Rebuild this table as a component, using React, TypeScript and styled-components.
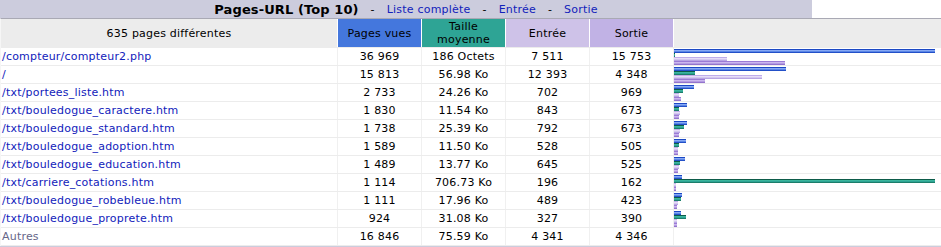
import React from "react";
import styled, { createGlobalStyle, css } from "styled-components";

const GlobalStyle = createGlobalStyle`
  html, body { margin: 0; padding: 0; background: #ffffff; }
  body { font-family: "DejaVu Sans", Verdana, "Liberation Sans", sans-serif; }
`;

type Row = {
  url: string;
  pages: number;
  size: string;
  kb: number;
  entry: number;
  exit: number;
};

const ROWS: Row[] = [
  { url: "/compteur/compteur2.php", pages: 36969, size: "186 Octets", kb: 0.18, entry: 7511, exit: 15753 },
  { url: "/", pages: 15813, size: "56.98 Ko", kb: 56.98, entry: 12393, exit: 4348 },
  { url: "/txt/portees_liste.htm", pages: 2733, size: "24.26 Ko", kb: 24.26, entry: 702, exit: 969 },
  { url: "/txt/bouledogue_caractere.htm", pages: 1830, size: "11.54 Ko", kb: 11.54, entry: 843, exit: 673 },
  { url: "/txt/bouledogue_standard.htm", pages: 1738, size: "25.39 Ko", kb: 25.39, entry: 792, exit: 673 },
  { url: "/txt/bouledogue_adoption.htm", pages: 1589, size: "11.50 Ko", kb: 11.5, entry: 528, exit: 505 },
  { url: "/txt/bouledogue_education.htm", pages: 1489, size: "13.77 Ko", kb: 13.77, entry: 645, exit: 525 },
  { url: "/txt/carriere_cotations.htm", pages: 1114, size: "706.73 Ko", kb: 706.73, entry: 196, exit: 162 },
  { url: "/txt/bouledogue_robebleue.htm", pages: 1111, size: "17.96 Ko", kb: 17.96, entry: 489, exit: 423 },
  { url: "/txt/bouledogue_proprete.htm", pages: 924, size: "31.08 Ko", kb: 31.08, entry: 327, exit: 390 },
];

const MAX_P = 36969;
const MAX_K = 706.73;
const BAR = 260;

const fmt = (n: number) => n.toString().replace(/\B(?=(\d{3})+(?!\d))/g, " ");
const bw = (v: number, max: number) => Math.floor((v * BAR) / max) + 1;

const Page = styled.div`
  width: 941px;
  font-size: 11px;
  letter-spacing: 0.2px;
  color: #000;
`;

const TitleRow = styled.div`
  display: grid;
  grid-template-columns: 812px 1fr;
  height: 18px;
`;

const TitleCell = styled.div`
  background: #ccccdd;
  display: flex;
  align-items: center;
  justify-content: center;
  white-space: pre;
  font-size: 11px;
`;

const TitleText = styled.span`
  font-family: "DejaVu Sans", sans-serif;
  font-size: 13px;
  font-weight: 700;
  letter-spacing: 0.1px;
`;

const Sep = styled.span`
  margin: 0 12px;
`;

const TitleLink = styled.a`
  color: #1122bb;
  text-decoration: none;
`;

const Blank = styled.div`
  background: #ffffff;
`;

const Frame = styled.div`
  background: #ccccdd;
  padding-bottom: 1px;
`;

const Table = styled.div`
  border-top: 1px solid #a9a9b4;
  border-left: 1px solid #f6f6f6;
  background: #ffffff;
`;

const COLS = "336px 83px 83px 83px 83px 1fr";

const HeadRow = styled.div`
  display: grid;
  grid-template-columns: ${COLS};
  column-gap: 1px;
  height: 28px;
  background: #ffffff;
  border-bottom: 1px solid #ececec;
`;

const HeadCell = styled.div<{ $bg: string }>`
  background: ${(p) => p.$bg};
  display: flex;
  align-items: center;
  justify-content: center;
  text-align: center;
  line-height: 13px;
`;

const DataRow = styled.div`
  display: grid;
  grid-template-columns: ${COLS};
  column-gap: 1px;
  height: 17px;
  background: #f0f0f0;
  border-bottom: 1px solid #ececec;
`;

const UrlCell = styled.div<{ $muted?: boolean }>`
  background: #ffffff;
  display: flex;
  align-items: center;
  padding-left: 1px;
  white-space: nowrap;
  color: ${(p) => (p.$muted ? "#666688" : "#000")};
`;

const UrlLink = styled.a`
  color: #1122bb;
  text-decoration: none;
`;

const NumCell = styled.div`
  background: #ffffff;
  display: flex;
  align-items: center;
  justify-content: center;
  white-space: nowrap;
`;

const BarCell = styled.div`
  background: #ffffff;
  display: flex;
  flex-direction: column;
  align-items: flex-start;
  padding-top: 1px;
`;

const barColors = {
  p: css`
    background: linear-gradient(#1b48c4 0 25%, #86a8f4 25% 50%, #5b86e6 50% 75%, #2350c8 75% 100%);
  `,
  k: css`
    background: linear-gradient(#0d5b49 0 25%, #3bb59c 25% 50%, #2ea495 50% 75%, #1b7e6a 75% 100%);
  `,
  e: css`
    background: linear-gradient(#bfadea 0 25%, #e6ddf7 25% 50%, #d3c7f0 50% 75%, #b8a5e3 75% 100%);
  `,
  x: css`
    background: linear-gradient(#9b7bd5 0 25%, #cbb7ee 25% 50%, #b49be2 50% 75%, #9374cd 75% 100%);
  `,
};

const Bar = styled.div<{ $kind: keyof typeof barColors }>`
  height: 4px;
  flex: none;
  ${(p) => barColors[p.$kind]}
`;

export default function App() {
  return (
    <>
      <GlobalStyle />
      <Page>
        <TitleRow>
          <TitleCell>
            <TitleText>Pages-URL (Top 10)</TitleText>
            <Sep>-</Sep>
            <TitleLink href="#">Liste complète</TitleLink>
            <Sep>-</Sep>
            <TitleLink href="#">Entrée</TitleLink>
            <Sep>-</Sep>
            <TitleLink href="#">Sortie</TitleLink>
          </TitleCell>
          <Blank />
        </TitleRow>
        <Frame>
          <Table>
            <HeadRow>
              <HeadCell $bg="#ececec">635 pages différentes</HeadCell>
              <HeadCell $bg="#4477dd">Pages vues</HeadCell>
              <HeadCell $bg="#2ea495">
                Taille
                <br />
                moyenne
              </HeadCell>
              <HeadCell $bg="#cec2e8">Entrée</HeadCell>
              <HeadCell $bg="#c1b2e5">Sortie</HeadCell>
              <HeadCell $bg="#ececec" />
            </HeadRow>
            {ROWS.map((r) => (
              <DataRow key={r.url}>
                <UrlCell>
                  <UrlLink href="#">{r.url}</UrlLink>
                </UrlCell>
                <NumCell>{fmt(r.pages)}</NumCell>
                <NumCell>{r.size}</NumCell>
                <NumCell>{fmt(r.entry)}</NumCell>
                <NumCell>{fmt(r.exit)}</NumCell>
                <BarCell>
                  <Bar $kind="p" style={{ width: bw(r.pages, MAX_P) }} />
                  <Bar $kind="k" style={{ width: bw(r.kb, MAX_K) }} />
                  <Bar $kind="e" style={{ width: bw(r.entry, MAX_P) }} />
                  <Bar $kind="x" style={{ width: bw(r.exit, MAX_P) }} />
                </BarCell>
              </DataRow>
            ))}
            <DataRow>
              <UrlCell $muted>Autres</UrlCell>
              <NumCell>16 846</NumCell>
              <NumCell>75.59 Ko</NumCell>
              <NumCell>4 341</NumCell>
              <NumCell>4 346</NumCell>
              <BarCell />
            </DataRow>
          </Table>
        </Frame>
      </Page>
    </>
  );
}
